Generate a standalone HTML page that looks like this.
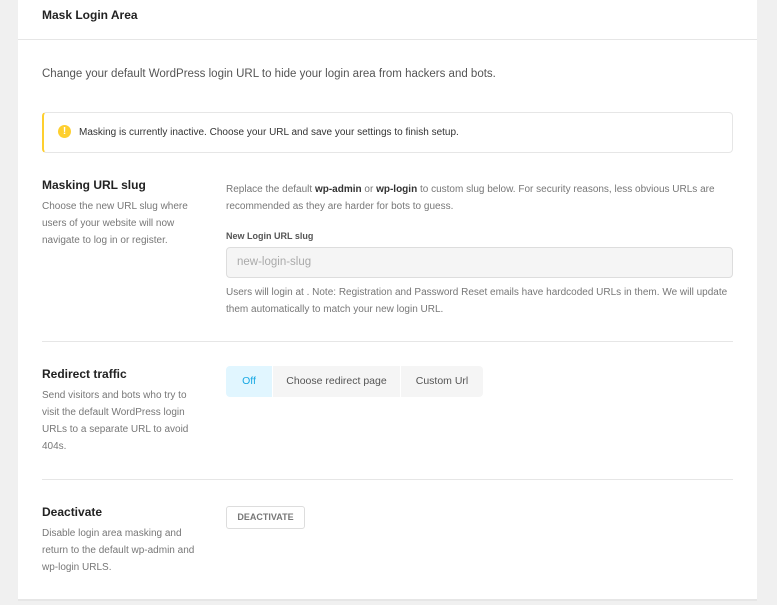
<!DOCTYPE html>
<html><head><style>
*{margin:0;padding:0;box-sizing:border-box}
body{width:777px;height:605px;background:#f0f0f0;font-family:"Liberation Sans",sans-serif;position:relative;overflow:hidden;color:#333}
.card{position:absolute;left:18px;top:0;width:739px;height:601px;background:#fff;border-bottom:2px solid #e6e6e6}
.a{position:absolute;white-space:nowrap}
.hr{position:absolute;height:1px;background:#e6e6e6}
.d{font-size:10px;color:#777;line-height:17px;white-space:normal}
.h{font-size:12px;font-weight:bold;color:#222}
</style></head><body>
<div class="card"></div>
<div class="a h" style="left:42px;top:8px;font-size:12px">Mask Login Area</div>
<div class="hr" style="left:18px;top:39px;width:739px"></div>
<div class="a" style="left:42px;top:68px;font-size:11.5px;color:#555">Change your default WordPress login URL to hide your login area from hackers and bots.</div>
<div class="a" style="left:42px;top:112px;width:691px;height:41px;border:1px solid #e6e6e6;border-left:2px solid #fecf2f;border-radius:4px"></div>
<div class="a" style="left:58px;top:125px;width:13px;height:13px;border-radius:50%;background:#fecf2f;color:#fff;font-size:10px;font-weight:bold;text-align:center;line-height:13px">!</div>
<div class="a" style="left:79px;top:127px;font-size:10px;color:#333">Masking is currently inactive. Choose your URL and save your settings to finish setup.</div>

<div class="a h" style="left:42px;top:178px">Masking URL slug</div>
<div class="a d" style="left:42px;top:198px;width:165px">Choose the new URL slug where users of your website will now navigate to log in or register.</div>
<div class="a d" style="left:226px;top:181px;width:490px">Replace the default <b style="color:#333">wp-admin</b> or <b style="color:#333">wp-login</b> to custom slug below. For security reasons, less obvious URLs are recommended as they are harder for bots to guess.</div>
<div class="a" style="left:226px;top:231px;font-size:9px;font-weight:bold;color:#555">New Login URL slug</div>
<div class="a" style="left:226px;top:247px;width:507px;height:31px;border:1px solid #ddd;border-radius:4px;background:#f5f5f5;padding:8px 10px;font-size:11.5px;color:#aaa">new-login-slug</div>
<div class="a d" style="left:226px;top:284px;width:510px">Users will login at . Note: Registration and Password Reset emails have hardcoded URLs in them. We will update them automatically to match your new login URL.</div>
<div class="hr" style="left:42px;top:341px;width:691px"></div>

<div class="a h" style="left:42px;top:367px">Redirect traffic</div>
<div class="a d" style="left:42px;top:387px;width:160px">Send visitors and bots who try to visit the default WordPress login URLs to a separate URL to avoid 404s.</div>
<div class="a" style="left:226px;top:366px;width:46px;height:31px;background:#e1f6ff;color:#17a8e3;font-size:10.5px;text-align:center;line-height:31px;border-radius:4px 0 0 4px">Off</div>
<div class="a" style="left:273px;top:366px;width:127px;height:31px;background:#f5f5f5;color:#555;font-size:10.5px;text-align:center;line-height:31px">Choose redirect page</div>
<div class="a" style="left:401px;top:366px;width:82px;height:31px;background:#f5f5f5;color:#555;font-size:10.5px;text-align:center;line-height:31px;border-radius:0 4px 4px 0">Custom Url</div>
<div class="hr" style="left:42px;top:479px;width:691px"></div>

<div class="a h" style="left:42px;top:505px">Deactivate</div>
<div class="a d" style="left:42px;top:525px;width:165px">Disable login area masking and return to the default wp-admin and wp-login URLS.</div>
<div class="a" style="left:226px;top:506px;width:79px;height:23px;border:1px solid #ddd;border-radius:3px;font-size:9px;font-weight:bold;color:#777;text-align:center;line-height:21px">DEACTIVATE</div>
</body></html>
